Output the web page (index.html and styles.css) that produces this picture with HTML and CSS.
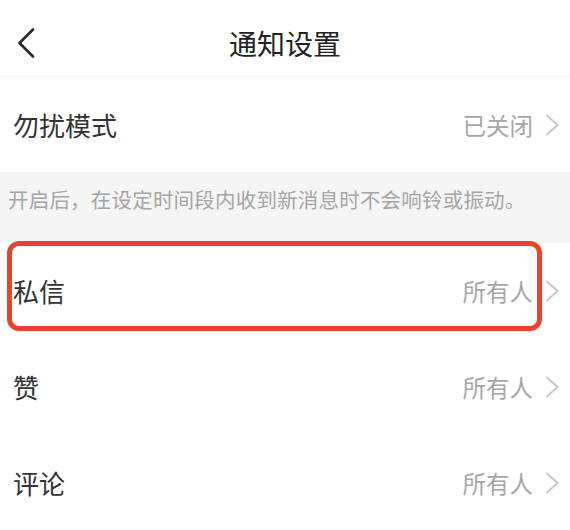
FILE: index.html
```html
<!DOCTYPE html>
<html lang="zh-CN">
<head>
<meta charset="utf-8">
<title>通知设置</title>
<link rel="stylesheet" href="styles.css">
</head>
<body>
<div class="page">
  <header class="nav">
    <div class="nav-left">
      <svg class="back" viewBox="0 0 18 30" width="18" height="30" aria-hidden="true">
        <path d="M16 1.5 L2.5 15 L16 28.5" fill="none" stroke="#2a2a2a" stroke-width="2.6" stroke-linecap="round" stroke-linejoin="round"/>
      </svg>
    </div>
    <h1 class="title">通知设置</h1>
    <div class="nav-right"></div>
  </header>

  <div class="row">
    <span class="label">勿扰模式</span>
    <span class="value">已关闭
      <svg class="chev" viewBox="0 0 14 22" width="14" height="22" aria-hidden="true"><path d="M2 1.5 L12.5 11 L2 20.5" fill="none" stroke="#c6c6c6" stroke-width="1.7" stroke-linecap="round" stroke-linejoin="round"/></svg>
    </span>
  </div>

  <div class="hint">开启后，在设定时间段内收到新消息时不会响铃或振动。</div>

  <div class="row marked">
    <span class="label">私信</span>
    <span class="value">所有人
      <svg class="chev" viewBox="0 0 14 22" width="14" height="22" aria-hidden="true"><path d="M2 1.5 L12.5 11 L2 20.5" fill="none" stroke="#c6c6c6" stroke-width="1.7" stroke-linecap="round" stroke-linejoin="round"/></svg>
    </span>
    <span class="mark"></span>
  </div>

  <div class="row">
    <span class="label">赞</span>
    <span class="value">所有人
      <svg class="chev" viewBox="0 0 14 22" width="14" height="22" aria-hidden="true"><path d="M2 1.5 L12.5 11 L2 20.5" fill="none" stroke="#c6c6c6" stroke-width="1.7" stroke-linecap="round" stroke-linejoin="round"/></svg>
    </span>
  </div>

  <div class="row">
    <span class="label">评论</span>
    <span class="value">所有人
      <svg class="chev" viewBox="0 0 14 22" width="14" height="22" aria-hidden="true"><path d="M2 1.5 L12.5 11 L2 20.5" fill="none" stroke="#c6c6c6" stroke-width="1.7" stroke-linecap="round" stroke-linejoin="round"/></svg>
    </span>
  </div>
</div>
</body>
</html>
```

FILE: styles.css
```css
* { box-sizing: border-box; }
html, body {
  margin: 0;
  padding: 0;
  background: #ffffff;
}
body {
  font-family: "Noto Sans CJK SC", "Noto Sans", sans-serif;
  color: #333333;
}
.page {
  width: 570px;
  overflow: hidden;
}
.nav {
  height: 77px;
  padding-top: 10px;
  display: grid;
  grid-template-columns: 1fr auto 1fr;
  align-items: center;
  border-bottom: 1px solid #f0f0f0;
}
.nav-left {
  padding-left: 17px;
  display: flex;
  align-items: center;
}
.back { display: block; }
.title {
  margin: 0;
  font-size: 28px;
  font-weight: 400;
  color: #222222;
  line-height: 40px;
}
.row {
  height: 96px;
  padding: 0 11px 0 13px;
  display: flex;
  align-items: center;
  justify-content: space-between;
  background: #ffffff;
}
.row:first-of-type { height: 95px; }
.label {
  font-size: 26px;
  line-height: 36px;
  color: #333333;
}
.value {
  display: flex;
  align-items: center;
  gap: 12px;
  font-size: 23.5px;
  line-height: 32px;
  color: #a6a6a6;
}
.chev { display: block; }
.hint {
  height: 71px;
  padding: 13px 0 0 8px;
  background: #f5f5f5;
  font-size: 20.5px;
  letter-spacing: 0.2px;
  line-height: 28px;
  color: #a5a5a5;
  white-space: nowrap;
}
.marked { position: relative; }
.mark {
  position: absolute;
  top: -2px;
  left: 7px;
  width: 535px;
  height: 90px;
  border: 5px solid #ea432b;
  border-radius: 12px;
  pointer-events: none;
}
```
